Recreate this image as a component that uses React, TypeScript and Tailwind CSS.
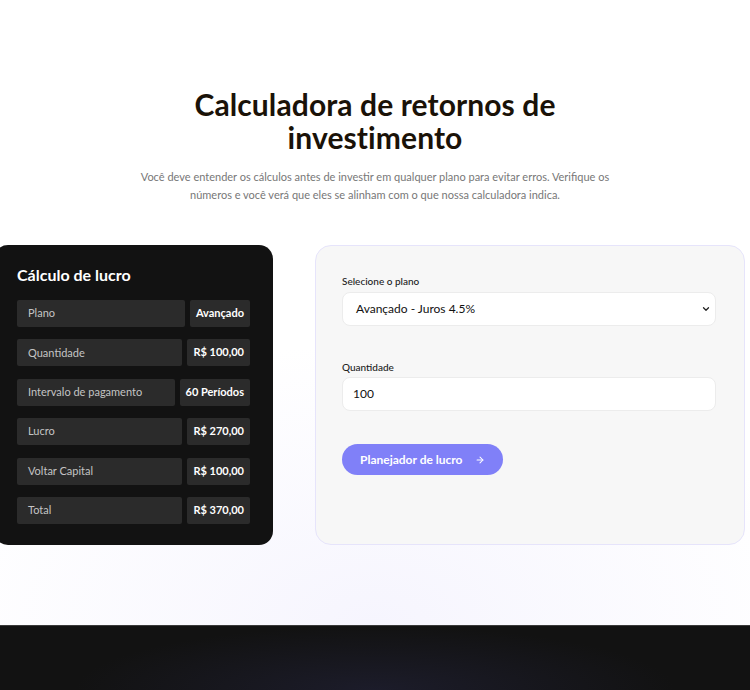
import React from "react";
import { ChevronDown, ArrowRight } from "lucide-react";

const rows = [
  { label: "Plano", value: "Avançado" },
  { label: "Quantidade", value: "R$ 100,00" },
  { label: "Intervalo de pagamento", value: "60 Períodos" },
  { label: "Lucro", value: "R$ 270,00" },
  { label: "Voltar Capital", value: "R$ 100,00" },
  { label: "Total", value: "R$ 370,00" },
];

export default function App() {
  return (
    <div
      className="min-h-[690px] bg-white overflow-hidden"
      style={{ fontFamily: "Lato, 'Noto Sans', sans-serif" }}
    >
      <section className="relative pt-[88px] pb-[80px] bg-[radial-gradient(ellipse_60%_45%_at_50%_100%,#f6f5fe_0%,#ffffff_100%)]">
        <div className="text-center">
          <h2 className="text-[30px] leading-[33px] font-bold text-[#1a1208] tracking-[0.1px]">
            Calculadora de retornos de
            <br />
            investimento
          </h2>
          <p className="mt-[14px] mx-auto w-[470px] text-[11px] leading-[18px] text-[#777777]">
            Você deve entender os cálculos antes de investir em qualquer plano para evitar erros. Verifique os números e você verá que eles se alinham com o que nossa calculadora indica.
          </p>
        </div>

        <div className="mt-[41px] flex items-stretch gap-[42px]">
          <div className="ml-[-6px] w-[279px] shrink-0 bg-[#121212] rounded-[14px] pl-[23px] pr-[23px] pt-[20px] pb-[21px]">
            <h3 className="text-[16px] leading-[20px] font-bold text-white">Cálculo de lucro</h3>
            <div className="mt-[15px] flex flex-col gap-[12.4px]">
              {rows.map((r) => (
                <div key={r.label} className="flex gap-[5px] h-[27px]">
                  <div className="flex-1 bg-[#2b2b2b] rounded-[2px] flex items-center pl-[11px] text-[11px] text-[#c4c4c4]">
                    {r.label}
                  </div>
                  <div className="bg-[#2b2b2b] rounded-[2px] px-[6px] pt-[5px] text-[11px] font-bold text-white whitespace-nowrap">
                    {r.value}
                  </div>
                </div>
              ))}
            </div>
          </div>

          <div className="flex-1 mr-[5px] bg-[#f7f7f7] border border-[#e6e4fb] rounded-[16px] pl-[26px] pr-[28px] pt-[29px]">
            <label className="block text-[10px] leading-[12px] text-[#222] font-medium">Selecione o plano</label>
            <div className="mt-[5px] h-[34px] bg-white border border-[#ececec] rounded-[8px] flex items-center justify-between pl-[13px] pr-[4px]">
              <span className="text-[12px] text-[#111]">Avançado - Juros 4.5%</span>
              <ChevronDown size={10} strokeWidth={3} className="text-[#222]" />
            </div>

            <label className="block mt-[35px] text-[10px] leading-[12px] text-[#222] font-medium">Quantidade</label>
            <div className="mt-[4px] h-[34px] bg-white border border-[#ececec] rounded-[8px] flex items-center pl-[10px]">
              <span className="text-[12px] text-[#111]">100</span>
            </div>

            <button className="mt-[33px] h-[31px] px-[18px] rounded-full bg-[#8080f8] text-white text-[12px] font-bold flex items-center gap-[12px]">
              Planejador de lucro
              <ArrowRight size={10} strokeWidth={2.5} />
            </button>
          </div>
        </div>
      </section>

      <div className="h-[65px] border-t border-[#3a3a3a] bg-[radial-gradient(ellipse_40%_100%_at_50%_100%,#1c1c2a_0%,#121212_100%)]" />
    </div>
  );
}
